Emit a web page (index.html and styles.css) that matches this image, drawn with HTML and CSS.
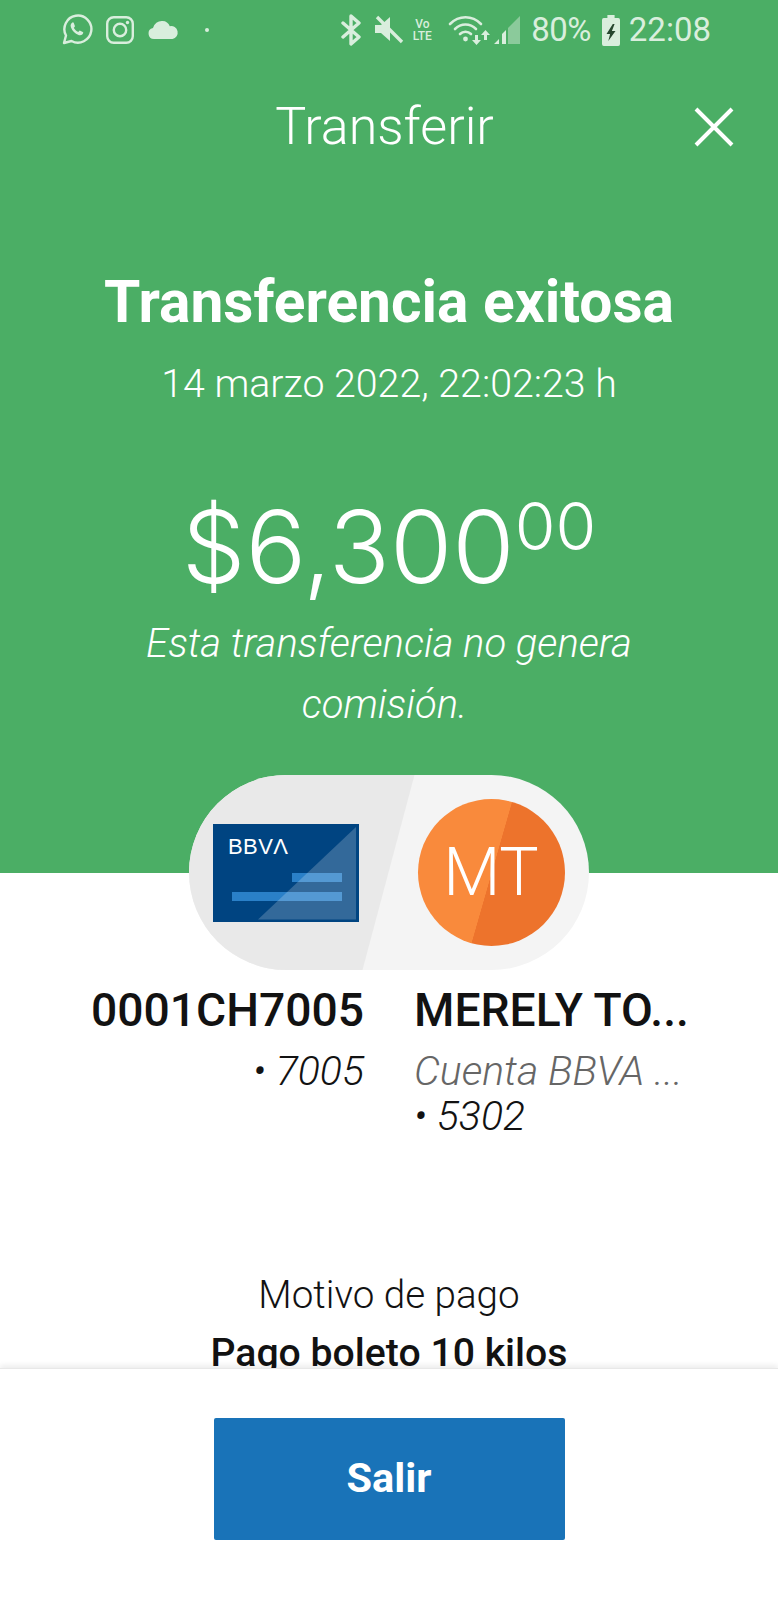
FILE: index.html
```html
<!DOCTYPE html>
<html lang="es">
<head>
<meta charset="utf-8">
<title>Transferir</title>
<link rel="stylesheet" href="styles.css">
</head>
<body>
<div class="screen">
  <main class="content">
    <section class="hero">
      <div class="status">
        <div class="status-left">
          <svg class="ic" width="32" height="32" viewBox="0 0 32 32"><path d="M3 29l2-7.500A13.500 13.500 0 1 1 10.500 27z" fill="none" stroke="currentColor" stroke-width="2.400" stroke-linejoin="round"/><path d="M11.500 8.500c-1.500 1-2.500 2.500-1.500 5 1.300 3.400 4 6.200 7.500 7.500 2.300.8 4-.2 4.700-2 .2-.5 0-.9-.4-1.100l-2.600-1.200c-.4-.2-.8 0-1.100.4l-.8 1c-2-.8-3.600-2.400-4.500-4.300l.8-.9c.3-.3.4-.7.200-1.100L12.800 9c-.3-.6-.8-.8-1.300-.5z" fill="currentColor"/></svg>
          <svg class="ic" width="30" height="30" viewBox="0 0 30 30"><rect x="2.200" y="2.200" width="25.600" height="25.600" rx="6.500" fill="none" stroke="currentColor" stroke-width="2.400"/><circle cx="15" cy="15" r="6.200" fill="none" stroke="currentColor" stroke-width="2.400"/><circle cx="22.500" cy="7.500" r="1.700" fill="currentColor"/></svg>
          <svg class="ic" width="32" height="20" viewBox="0 0 32 20"><path d="M7 19a5.500 5.500 0 0 1-1-10.900A9 9 0 0 1 15.500 1c3.500 0 6 2 7.300 5.200A6.500 6.500 0 0 1 25.500 19z" fill="currentColor"/></svg>
          <span class="dot"></span>
        </div>
        <div class="status-right">
          <svg class="ic" width="22" height="32" viewBox="0 0 22 32"><path d="M3 9l16 14-8 7V2l8 7L3 23" fill="none" stroke="currentColor" stroke-width="3.400" stroke-linejoin="round" stroke-linecap="round"/></svg>
          <svg class="ic mute" width="30" height="30" viewBox="0 0 30 30"><path d="M1 10h6l9-8v24l-9-8H1z" fill="currentColor"/><path d="M3 2l25 25" stroke="currentColor" stroke-width="3.400"/></svg>
          <span class="volte">Vo<br>LTE</span>
          <svg class="ic wifi" width="72" height="30" viewBox="0 0 72 30"><g fill="none" stroke="currentColor" stroke-width="2.600" stroke-linecap="round"><path d="M2 9c9-9 22-9 31 0"/><path d="M7 14c6-6 15-6 21 0"/><path d="M12 19c3-3 8-3 11 0"/></g><circle cx="17.500" cy="24" r="2.400" fill="currentColor"/><path d="M24 20h3v5h3l-4.500 5-4.500-5h3zM33 25h3v-5h3l-4.500-5-4.500 5h3z" fill="currentColor" transform="translate(3 0)"/><path d="M46 29l5-5v5zM54 29v-10l4-4v14z" fill="currentColor"/><path d="M60 29V13L72 1v28z" fill="currentColor" opacity=".45"/></svg>
          <span class="pct">80%</span>
          <svg class="ic" width="18" height="31" viewBox="0 0 20 31" preserveAspectRatio="none"><path d="M6 0h8v3h4a2 2 0 0 1 2 2v24a2 2 0 0 1-2 2H2a2 2 0 0 1-2-2V5a2 2 0 0 1 2-2h4z" fill="currentColor"/><path d="M12 9l-7 10h4l-2 7 8-10h-4l3-7z" fill="#27472f"/></svg>
          <span class="time">22:08</span>
        </div>
      </div>
      <header class="topbar">
        <h1 class="topbar-title">Transferir</h1>
        <svg class="close" width="40" height="40" viewBox="0 0 40 40"><path d="M2 2l36 36M38 2L2 38" stroke="#fff" stroke-width="4"/></svg>
      </header>
      <h2 class="result">Transferencia exitosa</h2>
      <p class="date">14 marzo 2022, 22:02:23 h</p>
      <p class="amount">$6,300<sup class="cents">00</sup></p>
      <p class="note">Esta transferencia no genera<br><span class="note-end">comisión.</span></p>
    </section>
    <section class="parties">
      <div class="pill">
        <div class="pill-left"></div>
        <svg class="card" width="146" height="98" viewBox="0 0 146 98">
          <rect width="146" height="98" fill="#004481"/>
          <rect x="19" y="68" width="110" height="9" fill="#2a80c8"/>
          <rect x="79" y="49" width="50" height="9" fill="#2a80c8"/>
          <path d="M45 95.500L143 3v92.500z" fill="#fff" opacity=".2"/>
          <text x="15" y="30" class="card-logo" textLength="60">BBVΛ</text>
        </svg>
        <div class="avatar"><span class="avatar-text">MT</span></div>
      </div>
      <div class="columns">
        <div class="col col-from">
          <div class="name">0001CH7005</div>
          <div class="num">• 7005</div>
        </div>
        <div class="col col-to">
          <div class="name">MERELY TO...</div>
          <div class="acct">Cuenta BBVA ...</div>
          <div class="num">• 5302</div>
        </div>
      </div>
    </section>
    <section class="reason">
      <div class="reason-label">Motivo de pago</div>
      <div class="reason-value">Pago boleto 10 kilos</div>
    </section>
  </main>
  <footer class="footer">
    <button class="exit">Salir</button>
  </footer>
</div>
</body>
</html>
```
FILE: styles.css
```css
* { box-sizing: border-box; }
html, body { margin: 0; padding: 0; }
body { font-family: Roboto, "Liberation Sans", sans-serif; background: #fff; color: #121212; }
h1, h2, p { margin: 0; font-weight: inherit; }
.screen { width: 778px; height: 1600px; display: flex; flex-direction: column; overflow: hidden; }
.content { flex: 1; min-height: 0; overflow: hidden; }
.hero { height: 873px; background: #4bae65; color: #fff; display: flex; flex-direction: column; align-items: center; text-align: center; font-weight: 300; }
.status { align-self: stretch; height: 60px; padding: 0 67px 0 61px; display: flex; justify-content: space-between; align-items: center; color: #d9eedd; }
.status-left, .status-right { display: flex; align-items: center; }
.status-left { gap: 12px; }
.status-right { gap: 9px; }
.ic { display: block; flex: none; }
.mute { margin-left: 3px; }
.wifi { margin-left: 5px; margin-right: 2px; }
.dot { width: 4px; height: 4px; border-radius: 50%; background: currentColor; margin-left: 14px; }
.volte { font-size: 12px; line-height: 12px; font-weight: 500; text-align: center; width: 24px; margin-left: -3px; }
.pct, .time { font-size: 33px; line-height: 36px; font-weight: 400; }
.pct { letter-spacing: -.6px; margin-right: 2px; }
.topbar { position: relative; align-self: stretch; height: 134px; display: flex; align-items: center; justify-content: center; padding-right: 9px; }
.topbar-title { font-size: 52px; line-height: 60px; }
.close { position: absolute; right: 44px; top: 47px; }
.result { margin-top: 73px; font-size: 58.7px; line-height: 70px; font-weight: 700; }
.date { margin-top: 22px; font-size: 39.3px; line-height: 50px; }
.amount { margin-top: 72px; font-family: Inter, Roboto, sans-serif; font-size: 101px; line-height: 130px; }
.cents { font-size: 66px; line-height: 0; vertical-align: 33px; }
.note { margin-top: 2px; font-size: 40px; line-height: 61px; font-style: italic; }
.note-end { padding-right: 9px; }
.parties { display: flex; flex-direction: column; align-items: center; margin-top: -98px; position: relative; }
.pill { position: relative; width: 400px; height: 195px; border-radius: 98px; background: #f4f4f4; overflow: hidden; display: flex; align-items: center; padding-left: 24px; gap: 59px; margin-left: -1px; }
.pill-left { position: absolute; inset: 0; background: #e9e9e9; clip-path: polygon(0 0, 226px 0, 174px 100%, 0 100%); }
.card { position: relative; display: block; flex: none; }
.card-logo { font: 400 22px "Liberation Sans", sans-serif; fill: #fff; }
.avatar { position: relative; width: 147px; height: 147px; border-radius: 50%; background: linear-gradient(106deg, #f98a3c 0 50%, #ed732c 50.300% 100%); display: flex; align-items: center; justify-content: center; }
.avatar-text { font-size: 66px; line-height: 1; font-weight: 300; color: #fff; }
.columns { display: flex; gap: 50px; width: 100%; margin-top: 12px; }
.col { width: 364px; flex: none; }
.col-from { text-align: right; }
.col-to { width: 290px; }
.name { font-size: 46.2px; line-height: 56px; font-weight: 500; white-space: nowrap; }
.num { font-size: 41px; line-height: 45px; font-style: italic; font-weight: 300; }
.acct { font-size: 41px; line-height: 45px; font-style: italic; font-weight: 300; color: #666; white-space: nowrap; }
.col-from .num, .col-to .acct { margin-top: 11px; }
.reason { margin-top: 131px; text-align: center; }
.reason-label { font-size: 38.6px; line-height: 50px; font-weight: 300; }
.reason-value { margin-top: 8px; font-size: 39.2px; line-height: 50px; font-weight: 500; }
.footer { height: 232px; flex: none; background: #fff; border-top: 1px solid #e8e8e8; box-shadow: 0 -3px 5px rgba(0,0,0,.07); position: relative; display: flex; justify-content: center; padding-top: 49px; }
.exit { width: 351px; height: 122px; padding-bottom: 4px; background: #1973b8; color: #fff; border: 0; border-radius: 2px; font: 700 41.5px Roboto, sans-serif; }
```
